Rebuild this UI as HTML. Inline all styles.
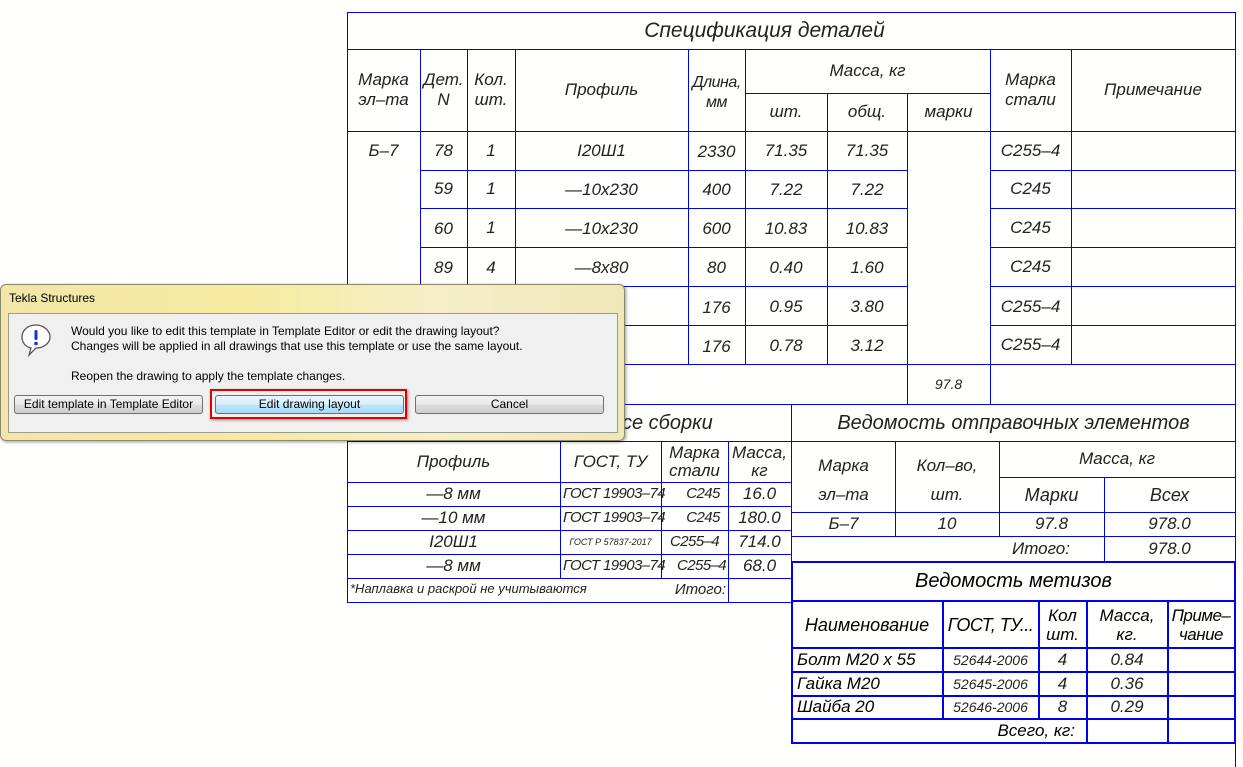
<!DOCTYPE html>
<html><head><meta charset="utf-8"><style>
body{margin:0;width:1243px;height:767px;background:#fffffd;position:relative;overflow:hidden;font-family:"Liberation Sans Narrow","Liberation Sans",sans-serif;}
.h{position:absolute;height:1px;background:#0000f0}
.v{position:absolute;width:1px;background:#0000f0}
.H{position:absolute;height:2px;background:#0000f0}
.V{position:absolute;width:2px;background:#0000f0}
.t{position:absolute;display:flex;align-items:center;justify-content:center;text-align:center;font-style:italic;color:#222;font-size:17px;line-height:18px;white-space:nowrap}
.g{font-size:15px;letter-spacing:-0.6px}
.dlg{position:absolute;left:0;top:284px;width:623px;height:155px;border:1px solid #8a8a6a;border-radius:6px;background:linear-gradient(90deg,#f2e6a8,#f6eba0 40%,#f5eec8 70%,#efe7b8);box-shadow:1px 1px 3px rgba(0,0,0,.4);font-family:"Liberation Sans",sans-serif;font-size:12px;color:#000}
.pan{position:absolute;left:7px;top:28px;width:608px;height:118px;background:#f0f0f0;border:1px solid #9c9c8c}
.btn{position:absolute;top:110px;height:17px;border:1px solid #707070;border-radius:3px;background:linear-gradient(#f2f2f2,#ebebeb 50%,#dcdcdc 51%,#cfcfcf);text-align:center;line-height:17px;font-size:12px}
</style></head><body>
<div class="h" style="left:347px;top:12px;width:888px"></div>
<div class="h" style="left:347px;top:49px;width:888px"></div>
<div class="h" style="left:745px;top:93px;width:245px"></div>
<div class="h" style="left:347px;top:131px;width:888px"></div>
<div class="h" style="left:420px;top:170px;width:487px"></div><div class="h" style="left:990px;top:170px;width:245px"></div>
<div class="h" style="left:420px;top:208px;width:487px"></div><div class="h" style="left:990px;top:208px;width:245px"></div>
<div class="h" style="left:420px;top:247px;width:487px"></div><div class="h" style="left:990px;top:247px;width:245px"></div>
<div class="h" style="left:420px;top:286px;width:487px"></div><div class="h" style="left:990px;top:286px;width:245px"></div>
<div class="h" style="left:420px;top:325px;width:487px"></div><div class="h" style="left:990px;top:325px;width:245px"></div>
<div class="h" style="left:347px;top:364px;width:888px"></div>
<div class="h" style="left:347px;top:404px;width:888px"></div>
<div class="v" style="left:347px;top:12px;height:590px"></div>
<div class="v" style="left:420px;top:49px;height:315px"></div>
<div class="v" style="left:467px;top:49px;height:315px"></div>
<div class="v" style="left:515px;top:49px;height:315px"></div>
<div class="v" style="left:688px;top:49px;height:315px"></div>
<div class="v" style="left:745px;top:49px;height:315px"></div>
<div class="v" style="left:827px;top:93px;height:271px"></div>
<div class="v" style="left:907px;top:93px;height:311px"></div>
<div class="v" style="left:990px;top:49px;height:355px"></div>
<div class="v" style="left:1071px;top:49px;height:315px"></div>
<div class="v" style="left:1235px;top:12px;height:755px"></div>
<div class="t" style="left:347px;top:12px;width:835px;height:37px;font-size:21px">Спецификация деталей</div>
<div class="t" style="left:347px;top:60px;width:73px;height:60px;line-height:20px">Марка<br>эл–та</div>
<div class="t" style="left:420px;top:60px;width:47px;height:60px;line-height:20px">Дет.<br>N</div>
<div class="t" style="left:467px;top:60px;width:48px;height:60px;line-height:20px">Кол.<br>шт.</div>
<div class="t" style="left:515px;top:49px;width:173px;height:82px">Профиль</div>
<div class="t" style="left:688px;top:52px;width:57px;height:82px;line-height:20px;font-size:16px;letter-spacing:-0.5px">Длина,<br>мм</div>
<div class="t" style="left:745px;top:49px;width:245px;height:44px">Масса, кг</div>
<div class="t" style="left:745px;top:93px;width:82px;height:38px">шт.</div>
<div class="t" style="left:827px;top:93px;width:80px;height:38px">общ.</div>
<div class="t" style="left:907px;top:93px;width:83px;height:38px">марки</div>
<div class="t" style="left:990px;top:49px;width:81px;height:82px;line-height:20px">Марка<br>стали</div>
<div class="t" style="left:1071px;top:49px;width:164px;height:82px">Примечание</div>
<div class="t" style="left:347px;top:131px;width:73px;height:39px">Б–7</div>
<div class="t" style="left:420px;top:131px;width:47px;height:39px">78</div><div class="t" style="left:467px;top:131px;width:48px;height:39px">1</div><div class="t" style="left:515px;top:131px;width:173px;height:39px">I20Ш1</div><div class="t" style="left:688px;top:131px;width:57px;height:42px">2330</div><div class="t" style="left:745px;top:131px;width:82px;height:39px">71.35</div><div class="t" style="left:827px;top:131px;width:80px;height:39px">71.35</div><div class="t" style="left:990px;top:131px;width:81px;height:39px">С255–4</div>
<div class="t" style="left:420px;top:170px;width:47px;height:38px">59</div><div class="t" style="left:467px;top:170px;width:48px;height:38px">1</div><div class="t" style="left:515px;top:170px;width:173px;height:40px">—10х230</div><div class="t" style="left:688px;top:170px;width:57px;height:40px">400</div><div class="t" style="left:745px;top:170px;width:82px;height:40px">7.22</div><div class="t" style="left:827px;top:170px;width:80px;height:40px">7.22</div><div class="t" style="left:990px;top:170px;width:81px;height:38px">С245</div>
<div class="t" style="left:420px;top:208px;width:47px;height:41px">60</div><div class="t" style="left:467px;top:208px;width:48px;height:39px">1</div><div class="t" style="left:515px;top:208px;width:173px;height:41px">—10х230</div><div class="t" style="left:688px;top:208px;width:57px;height:41px">600</div><div class="t" style="left:745px;top:208px;width:82px;height:41px">10.83</div><div class="t" style="left:827px;top:208px;width:80px;height:41px">10.83</div><div class="t" style="left:990px;top:208px;width:81px;height:39px">С245</div>
<div class="t" style="left:420px;top:247px;width:47px;height:41px">89</div><div class="t" style="left:467px;top:247px;width:48px;height:41px">4</div><div class="t" style="left:515px;top:247px;width:173px;height:41px">—8х80</div><div class="t" style="left:688px;top:247px;width:57px;height:41px">80</div><div class="t" style="left:745px;top:247px;width:82px;height:41px">0.40</div><div class="t" style="left:827px;top:247px;width:80px;height:41px">1.60</div><div class="t" style="left:990px;top:247px;width:81px;height:39px">С245</div>
<div class="t" style="left:688px;top:286px;width:57px;height:43px">176</div><div class="t" style="left:745px;top:286px;width:82px;height:41px">0.95</div><div class="t" style="left:827px;top:286px;width:80px;height:41px">3.80</div><div class="t" style="left:990px;top:286px;width:81px;height:41px">С255–4</div>
<div class="t" style="left:688px;top:325px;width:57px;height:43px">176</div><div class="t" style="left:745px;top:325px;width:82px;height:41px">0.78</div><div class="t" style="left:827px;top:325px;width:80px;height:41px">3.12</div><div class="t" style="left:990px;top:325px;width:81px;height:39px">С255–4</div>
<div class="t" style="left:907px;top:364px;width:83px;height:40px;font-size:14px">97.8</div>
<div class="h" style="left:347px;top:441px;width:888px"></div>
<div class="v" style="left:791px;top:404px;height:157px"></div>
<div class="h" style="left:347px;top:482px;width:444px"></div>
<div class="h" style="left:347px;top:506px;width:444px"></div>
<div class="h" style="left:347px;top:530px;width:444px"></div>
<div class="h" style="left:347px;top:554px;width:444px"></div>
<div class="h" style="left:347px;top:578px;width:444px"></div>
<div class="h" style="left:347px;top:602px;width:444px"></div>
<div class="v" style="left:560px;top:441px;height:137px"></div>
<div class="v" style="left:661px;top:441px;height:137px"></div>
<div class="v" style="left:728px;top:441px;height:161px"></div>
<div class="t" style="left:560px;top:404px;width:231px;height:37px;font-size:20px;justify-content:flex-start;padding-left:62px">се сборки</div>
<div class="t" style="left:347px;top:441px;width:213px;height:41px">Профиль</div>
<div class="t" style="left:560px;top:441px;width:101px;height:41px">ГОСТ, ТУ</div>
<div class="t" style="left:661px;top:441px;width:67px;height:41px;line-height:18px">Марка<br>стали</div>
<div class="t" style="left:728px;top:441px;width:63px;height:41px;line-height:18px">Масса,<br>кг</div>
<div class="t" style="left:347px;top:482px;width:213px;height:24px">—8 мм</div><div class="t g" style="left:563px;top:482px;width:115px;height:24px;justify-content:flex-start">ГОСТ 19903–74</div><div class="t g" style="left:680px;top:482px;width:46px;height:24px">С245</div><div class="t" style="left:728px;top:482px;width:63px;height:24px">16.0</div>
<div class="t" style="left:347px;top:506px;width:213px;height:24px">—10 мм</div><div class="t g" style="left:563px;top:506px;width:115px;height:24px;justify-content:flex-start">ГОСТ 19903–74</div><div class="t g" style="left:680px;top:506px;width:46px;height:24px">С245</div><div class="t" style="left:728px;top:506px;width:63px;height:24px">180.0</div>
<div class="t" style="left:347px;top:530px;width:213px;height:24px">I20Ш1</div><div class="t" style="left:560px;top:530px;width:101px;height:24px;font-size:9px">ГОСТ Р 57837-2017</div><div class="t g" style="left:661px;top:530px;width:67px;height:24px">С255–4</div><div class="t" style="left:728px;top:530px;width:63px;height:24px">714.0</div>
<div class="t" style="left:347px;top:554px;width:213px;height:24px">—8 мм</div><div class="t g" style="left:563px;top:554px;width:115px;height:24px;justify-content:flex-start">ГОСТ 19903–74</div><div class="t g" style="left:675px;top:554px;width:53px;height:24px">С255–4</div><div class="t" style="left:728px;top:554px;width:63px;height:24px">68.0</div>
<div class="t" style="left:350px;top:578px;width:300px;height:22px;font-size:13px;justify-content:flex-start">*Наплавка и раскрой не учитываются</div>
<div class="t" style="left:660px;top:578px;width:66px;height:24px;font-size:15px;justify-content:flex-end">Итого:</div>
<div class="h" style="left:999px;top:477px;width:236px"></div>
<div class="h" style="left:792px;top:512px;width:443px"></div>
<div class="h" style="left:792px;top:536px;width:443px"></div>
<div class="v" style="left:895px;top:441px;height:95px"></div>
<div class="v" style="left:999px;top:441px;height:95px"></div>
<div class="v" style="left:1104px;top:477px;height:84px"></div>
<div class="t" style="left:792px;top:404px;width:443px;height:37px;font-size:20px">Ведомость отправочных элементов</div>
<div class="t" style="left:792px;top:448px;width:103px;height:64px;line-height:29px">Марка<br>эл–та</div>
<div class="t" style="left:895px;top:448px;width:104px;height:64px;line-height:29px">Кол–во,<br>шт.</div>
<div class="t" style="left:999px;top:441px;width:236px;height:36px">Масса, кг</div>
<div class="t" style="left:999px;top:477px;width:105px;height:35px;font-size:18px">Марки</div>
<div class="t" style="left:1104px;top:477px;width:131px;height:35px;font-size:18px">Всех</div>
<div class="t" style="left:792px;top:512px;width:103px;height:24px">Б–7</div>
<div class="t" style="left:895px;top:512px;width:104px;height:24px">10</div>
<div class="t" style="left:999px;top:512px;width:105px;height:24px">97.8</div>
<div class="t" style="left:1104px;top:512px;width:131px;height:24px">978.0</div>
<div class="t" style="left:990px;top:536px;width:80px;height:25px;justify-content:flex-end">Итого:</div>
<div class="t" style="left:1104px;top:536px;width:131px;height:25px">978.0</div>
<div class="H" style="left:792px;top:561px;width:443px"></div>
<div class="H" style="left:792px;top:600px;width:443px"></div>
<div class="H" style="left:792px;top:647px;width:443px"></div>
<div class="H" style="left:792px;top:671px;width:443px"></div>
<div class="H" style="left:792px;top:695px;width:443px"></div>
<div class="H" style="left:792px;top:718px;width:443px"></div>
<div class="H" style="left:792px;top:742px;width:443px"></div>
<div class="V" style="left:791px;top:561px;height:183px"></div>
<div class="V" style="left:1234px;top:561px;height:183px"></div>
<div class="V" style="left:942px;top:600px;height:120px"></div>
<div class="V" style="left:1038px;top:600px;height:120px"></div>
<div class="V" style="left:1086px;top:600px;height:144px"></div>
<div class="V" style="left:1167px;top:600px;height:144px"></div>
<div class="t" style="left:792px;top:562px;width:443px;height:38px;font-size:20px;color:#000">Ведомость метизов</div>
<div class="t" style="left:792px;top:602px;width:150px;height:45px;font-size:18px;color:#000">Наименование</div>
<div class="t" style="left:943px;top:602px;width:95px;height:45px;font-size:18px;color:#000;letter-spacing:-0.5px">ГОСТ, ТУ...</div>
<div class="t" style="left:1039px;top:602px;width:47px;height:45px;line-height:19px;color:#000">Кол<br>шт.</div>
<div class="t" style="left:1087px;top:602px;width:80px;height:45px;line-height:19px;color:#000">Масса,<br>кг.</div>
<div class="t" style="left:1168px;top:602px;width:66px;height:45px;line-height:19px;color:#000;letter-spacing:-0.5px">Приме–<br>чание</div>
<div class="t" style="left:797px;top:648px;width:145px;height:23px;justify-content:flex-start;color:#000">Болт М20 х 55</div><div class="t" style="left:943px;top:648px;width:95px;height:23px;font-size:14px">52644-2006</div><div class="t" style="left:1039px;top:648px;width:47px;height:23px">4</div><div class="t" style="left:1087px;top:648px;width:80px;height:23px">0.84</div>
<div class="t" style="left:797px;top:672px;width:145px;height:23px;justify-content:flex-start;color:#000">Гайка М20</div><div class="t" style="left:943px;top:672px;width:95px;height:23px;font-size:14px">52645-2006</div><div class="t" style="left:1039px;top:672px;width:47px;height:23px">4</div><div class="t" style="left:1087px;top:672px;width:80px;height:23px">0.36</div>
<div class="t" style="left:797px;top:696px;width:145px;height:22px;justify-content:flex-start;color:#000">Шайба 20</div><div class="t" style="left:943px;top:696px;width:95px;height:22px;font-size:14px">52646-2006</div><div class="t" style="left:1039px;top:696px;width:47px;height:22px">8</div><div class="t" style="left:1087px;top:696px;width:80px;height:22px">0.29</div>
<div class="t" style="left:960px;top:719px;width:115px;height:23px;justify-content:flex-end;color:#000">Всего, кг:</div>
<div class="dlg">
 <div style="position:absolute;left:8px;top:6px">Tekla Structures</div>
 <div class="pan">
  <svg style="position:absolute;left:10px;top:8px" width="34" height="36" viewBox="0 0 34 36"><path d="M17 3 C8 3 3 9 3 15 C3 21 7 25 12 26 L10 33 L17 26 C25 26 31 21 31 15 C31 9 25 3 17 3Z" fill="#fff" stroke="#555" stroke-width="1.3"/><rect x="15.5" y="8" width="3" height="10" rx="1.2" fill="#1530d0"/><circle cx="17" cy="21.5" r="1.8" fill="#1530d0"/></svg>
  <div style="position:absolute;left:62px;top:10px;line-height:15px">Would you like to edit this template in Template Editor or edit the drawing layout?<br>Changes will be applied in all drawings that use this template or use the same layout.<br><br>Reopen the drawing to apply the template changes.</div>
  <div class="btn" style="left:5px;top:81px;width:187px">Edit template in Template Editor</div>
  <div style="position:absolute;left:201px;top:75px;width:193px;height:26px;border:2px solid #e00000;box-shadow:1px 1px 3px rgba(0,0,0,.4)"></div>
  <div class="btn" style="left:206px;top:81px;width:187px;border-color:#3c7fb1;background:linear-gradient(#eaf6fd,#d9f0fc 50%,#bee6fd 51%,#a7d9f5)">Edit drawing layout</div>
  <div class="btn" style="left:406px;top:81px;width:187px">Cancel</div>
 </div>
</div>
</body></html>
